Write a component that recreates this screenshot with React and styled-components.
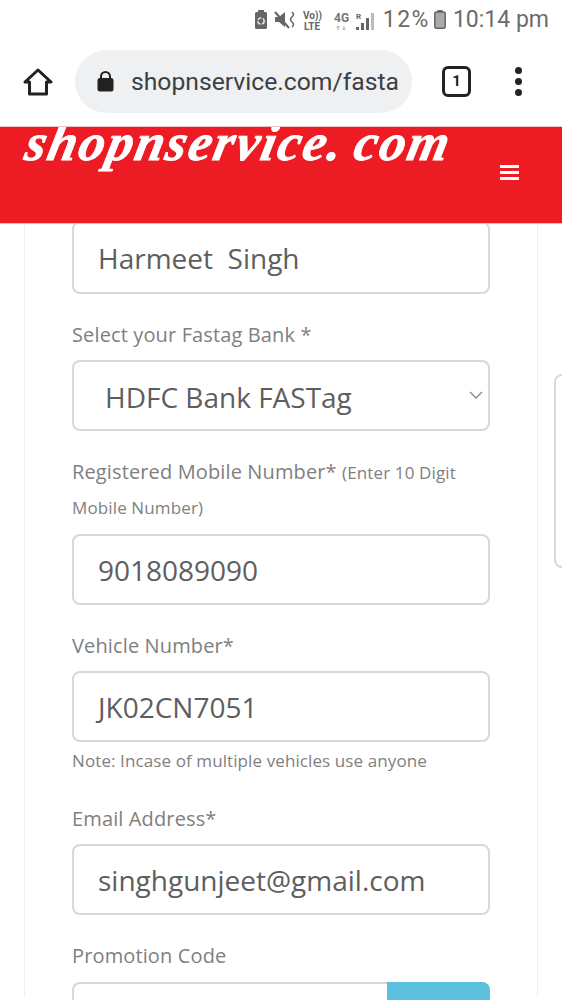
import React from 'react';
import styled, { createGlobalStyle } from 'styled-components';

const Global = createGlobalStyle`
  html, body { margin: 0; padding: 0; background: #fff; }
  body { font-family: "Open Sans", sans-serif; height: 1000px; overflow: hidden; }
`;

const Page = styled.div`
  position: relative;
  width: 562px;
  height: 1000px;
  overflow: hidden;
`;

const StatusBar = styled.div`
  height: 38px;
  display: flex;
  align-items: center;
  justify-content: flex-end;
  padding: 1px 13px 0 0;
  box-sizing: border-box;
  color: #6b6b6b;
  font-family: "Roboto", sans-serif;
`;

const StatusIcons = styled.div`
  display: flex;
  align-items: center;
  margin-right: 8px;
`;

const StatusText = styled.span`
  font-size: 23px;
  line-height: 37px;
  white-space: nowrap;
  margin-left: ${({ gap }) => gap || 0}px;
  letter-spacing: ${({ wide }) => (wide ? '1.5px' : '0')};
`;

const Toolbar = styled.div`
  height: 88px;
  display: flex;
  align-items: center;
  padding: 0 0 0 23px;
  box-sizing: border-box;
`;

const UrlPill = styled.div`
  width: 337px;
  height: 63px;
  margin-left: 22px;
  margin-top: -2px;
  border-radius: 32px;
  background: #eef0f2;
  display: flex;
  align-items: center;
  padding-left: 22px;
  box-sizing: border-box;
  overflow: hidden;
`;

const UrlText = styled.span`
  margin-left: 17px;
  font-family: "Roboto", sans-serif;
  font-size: 24.7px;
  color: #3c4043;
  white-space: nowrap;
  overflow: hidden;
  width: 269px;
`;

const TabCount = styled.div`
  width: 23px;
  height: 25px;
  border: 3px solid #222;
  border-radius: 6px;
  margin-left: 30px;
  margin-top: -2px;
  display: flex;
  align-items: center;
  justify-content: center;
  font: 700 15px "Roboto", sans-serif;
  color: #222;
`;

const MenuDots = styled.div`
  margin-left: 44px;
  margin-top: -2px;
  display: flex;
  flex-direction: column;
  gap: 4px;
  span {
    width: 7px;
    height: 7px;
    border-radius: 50%;
    background: #222;
  }
`;

const Header = styled.header`
  position: relative;
  z-index: 2;
  height: 98px;
  background: #ed1c24;
  border-top: 1px solid #f0c4c5;
  border-bottom: 1px solid #f3b5b7;
  box-sizing: border-box;
  display: flex;
  justify-content: space-between;
  align-items: flex-start;
  padding: 0 43px 0 22px;
  overflow: hidden;
`;

const Logo = styled.div`
  font-family: "Liberation Serif", serif;
  font-style: italic;
  font-weight: 700;
  font-size: 52px;
  line-height: 32px;
  letter-spacing: 2.1px;
  word-spacing: -4px;
  color: #fff;
  -webkit-text-stroke: 0.8px #fff;
  white-space: pre;
  transform: skewX(-12deg);
  transform-origin: left top;
  margin-left: 8px;
`;

const Burger = styled.div`
  margin-top: 38px;
  display: flex;
  flex-direction: column;
  gap: 3px;
  span {
    width: 19px;
    height: 3px;
    background: #fff;
  }
`;

const Card = styled.main`
  width: 514px;
  height: 776px;
  margin-left: 24px;
  padding: 0 47px;
  box-sizing: border-box;
  border-left: 1px solid #eeeeee;
  border-right: 1px solid #eeeeee;
  background: #fff;
`;

const Label = styled.label`
  display: block;
  margin-top: ${({ top }) => top}px;
  margin-bottom: ${({ bottom }) => bottom}px;
  font-size: 20px;
  line-height: ${({ tight }) => (tight ? 34 : 35)}px;
  letter-spacing: 0.13px;
  color: #808080;
  small {
    font-size: 17px;
  }
`;

const Field = styled.div`
  position: relative;
  height: ${({ first }) => (first ? 73 : 71)}px;
  margin-top: ${({ first }) => (first ? -3 : 0)}px;
  box-sizing: border-box;
  border: 2px solid #d8d8d8;
  border-radius: 8px;
  padding-left: ${({ indent }) => indent || 24}px;
  padding-top: ${({ indent }) => (indent ? 2 : 0)}px;
  display: flex;
  align-items: center;
  font-size: 28px;
  color: #5e5e5e;
  white-space: pre;
  background: #fff;
`;

const Chevron = styled.svg`
  position: absolute;
  right: 5px;
  top: 29px;
`;

const Note = styled.div`
  margin-top: 6px;
  font-size: 17px;
  line-height: 26px;
  letter-spacing: 0.1px;
  color: #808080;
`;

const PromoRow = styled.div`
  display: flex;
  height: 71px;
`;

const PromoInput = styled.div`
  flex: 1;
  border: 2px solid #d8d8d8;
  border-right: 0;
  border-radius: 8px 0 0 8px;
`;

const PromoButton = styled.div`
  width: 103px;
  background: #5bc0de;
  border-radius: 0 8px 8px 0;
`;

const SideTab = styled.div`
  position: absolute;
  left: 554px;
  top: 374px;
  width: 20px;
  height: 194px;
  box-sizing: border-box;
  border: 2px solid #d8d8d8;
  border-radius: 8px;
`;

const HomeIcon = () => (
  <svg width="30" height="30" viewBox="0 0 30 30" fill="none" stroke="#222" strokeWidth="3" strokeLinejoin="round">
    <path d="M2 15 L15 3 L28 15 H23.5 V27 H6.5 V15 Z" />
  </svg>
);

const LockIcon = () => (
  <svg width="17" height="22" viewBox="0 0 17 22">
    <path d="M4 9 V6.5 a4.5 4.5 0 0 1 9 0 V9" fill="none" stroke="#222" strokeWidth="2" />
    <rect x="0.5" y="8" width="16" height="13.5" rx="2.5" fill="#222" />
  </svg>
);

const SystemIcons = () => (
  <svg width="128" height="26" viewBox="0 0 128 26">
    <rect x="8" y="5" width="12" height="17" rx="1.5" fill="#666" />
    <rect x="11" y="3" width="6" height="3" fill="#666" />
    <circle cx="14" cy="14" r="3.2" fill="none" stroke="#e4e4e4" strokeWidth="1.6" strokeDasharray="4 1.500" />
    <path d="M28 10 h4 l6 -5 v15 l-6 -5 h-4 Z" fill="#666" />
    <path d="M28 5 L42 21" stroke="#666" strokeWidth="2" />
    <path d="M45 5 q3 2.500 0 5 q-3 2.500 0 5 q3 2.500 0 5" fill="none" stroke="#666" strokeWidth="1.600" />
    <text x="56" y="12" fontFamily="Roboto, sans-serif" fontWeight="700" fontSize="10" fill="#666">Vo))</text>
    <text x="57" y="23" fontFamily="Roboto, sans-serif" fontWeight="700" fontSize="10" fill="#666">LTE</text>
    <text x="87" y="15" fontFamily="Roboto, sans-serif" fontWeight="700" fontSize="12" fill="#777">4G</text>
    <path d="M91 19 v4 M89.500 20.500 l1.500 -1.500 l1.500 1.500 M97 19 v4 M95.500 21.500 l1.500 1.500 l1.500 -1.500" stroke="#aaa" strokeWidth="1" fill="none" />
    <text x="109" y="12" fontFamily="Roboto, sans-serif" fontWeight="700" fontSize="8" fill="#666">R</text>
    <rect x="109" y="20" width="3" height="3" fill="#666" />
    <rect x="114" y="16" width="3" height="7" fill="#666" />
    <rect x="119" y="11" width="3" height="12" fill="#666" />
    <rect x="124" y="6" width="3" height="17" fill="#bbb" />
  </svg>
);

const BatteryIcon = () => (
  <svg width="12" height="19" viewBox="0 0 12 19" style={{ marginLeft: 4 }}>
    <rect x="3.500" y="0" width="5" height="3" fill="#666" />
    <rect x="0.800" y="2" width="10.400" height="16.200" rx="1.500" fill="#aaa" stroke="#666" strokeWidth="1.500" />
  </svg>
);

const App = () => (
  <Page>
    <Global />
    <StatusBar>
      <StatusIcons>
        <SystemIcons />
      </StatusIcons>
      <StatusText wide>12%</StatusText>
      <BatteryIcon />
      <StatusText gap={7}>10:14 pm</StatusText>
    </StatusBar>
    <Toolbar>
      <HomeIcon />
      <UrlPill>
        <LockIcon />
        <UrlText>shopnservice.com/fastag</UrlText>
      </UrlPill>
      <TabCount>1</TabCount>
      <MenuDots>
        <span />
        <span />
        <span />
      </MenuDots>
    </Toolbar>
    <Header>
      <Logo>shopnservice. com</Logo>
      <Burger>
        <span />
        <span />
        <span />
      </Burger>
    </Header>
    <Card>
      <Field first>Harmeet  Singh</Field>
      <Label top={23} bottom={8}>Select your Fastag Bank *</Label>
      <Field indent={31}>
        HDFC Bank FASTag
        <Chevron width="14" height="9" viewBox="0 0 14 9" fill="none" stroke="#888" strokeWidth="1.300">
          <path d="M1 1 L7 7 L13 1" />
        </Chevron>
      </Field>
      <Label tight top={24} bottom={9}>
        Registered Mobile Number* <small>(Enter 10 Digit Mobile Number)</small>
      </Label>
      <Field>9018089090</Field>
      <Label top={23} bottom={8}>Vehicle Number*</Label>
      <Field>JK02CN7051</Field>
      <Note>Note: Incase of multiple vehicles use anyone</Note>
      <Label top={27} bottom={8}>Email Address*</Label>
      <Field>singhgunjeet@gmail.com</Field>
      <Label top={23} bottom={9}>Promotion Code</Label>
      <PromoRow>
        <PromoInput />
        <PromoButton />
      </PromoRow>
    </Card>
    <SideTab />
  </Page>
);

export default App;
